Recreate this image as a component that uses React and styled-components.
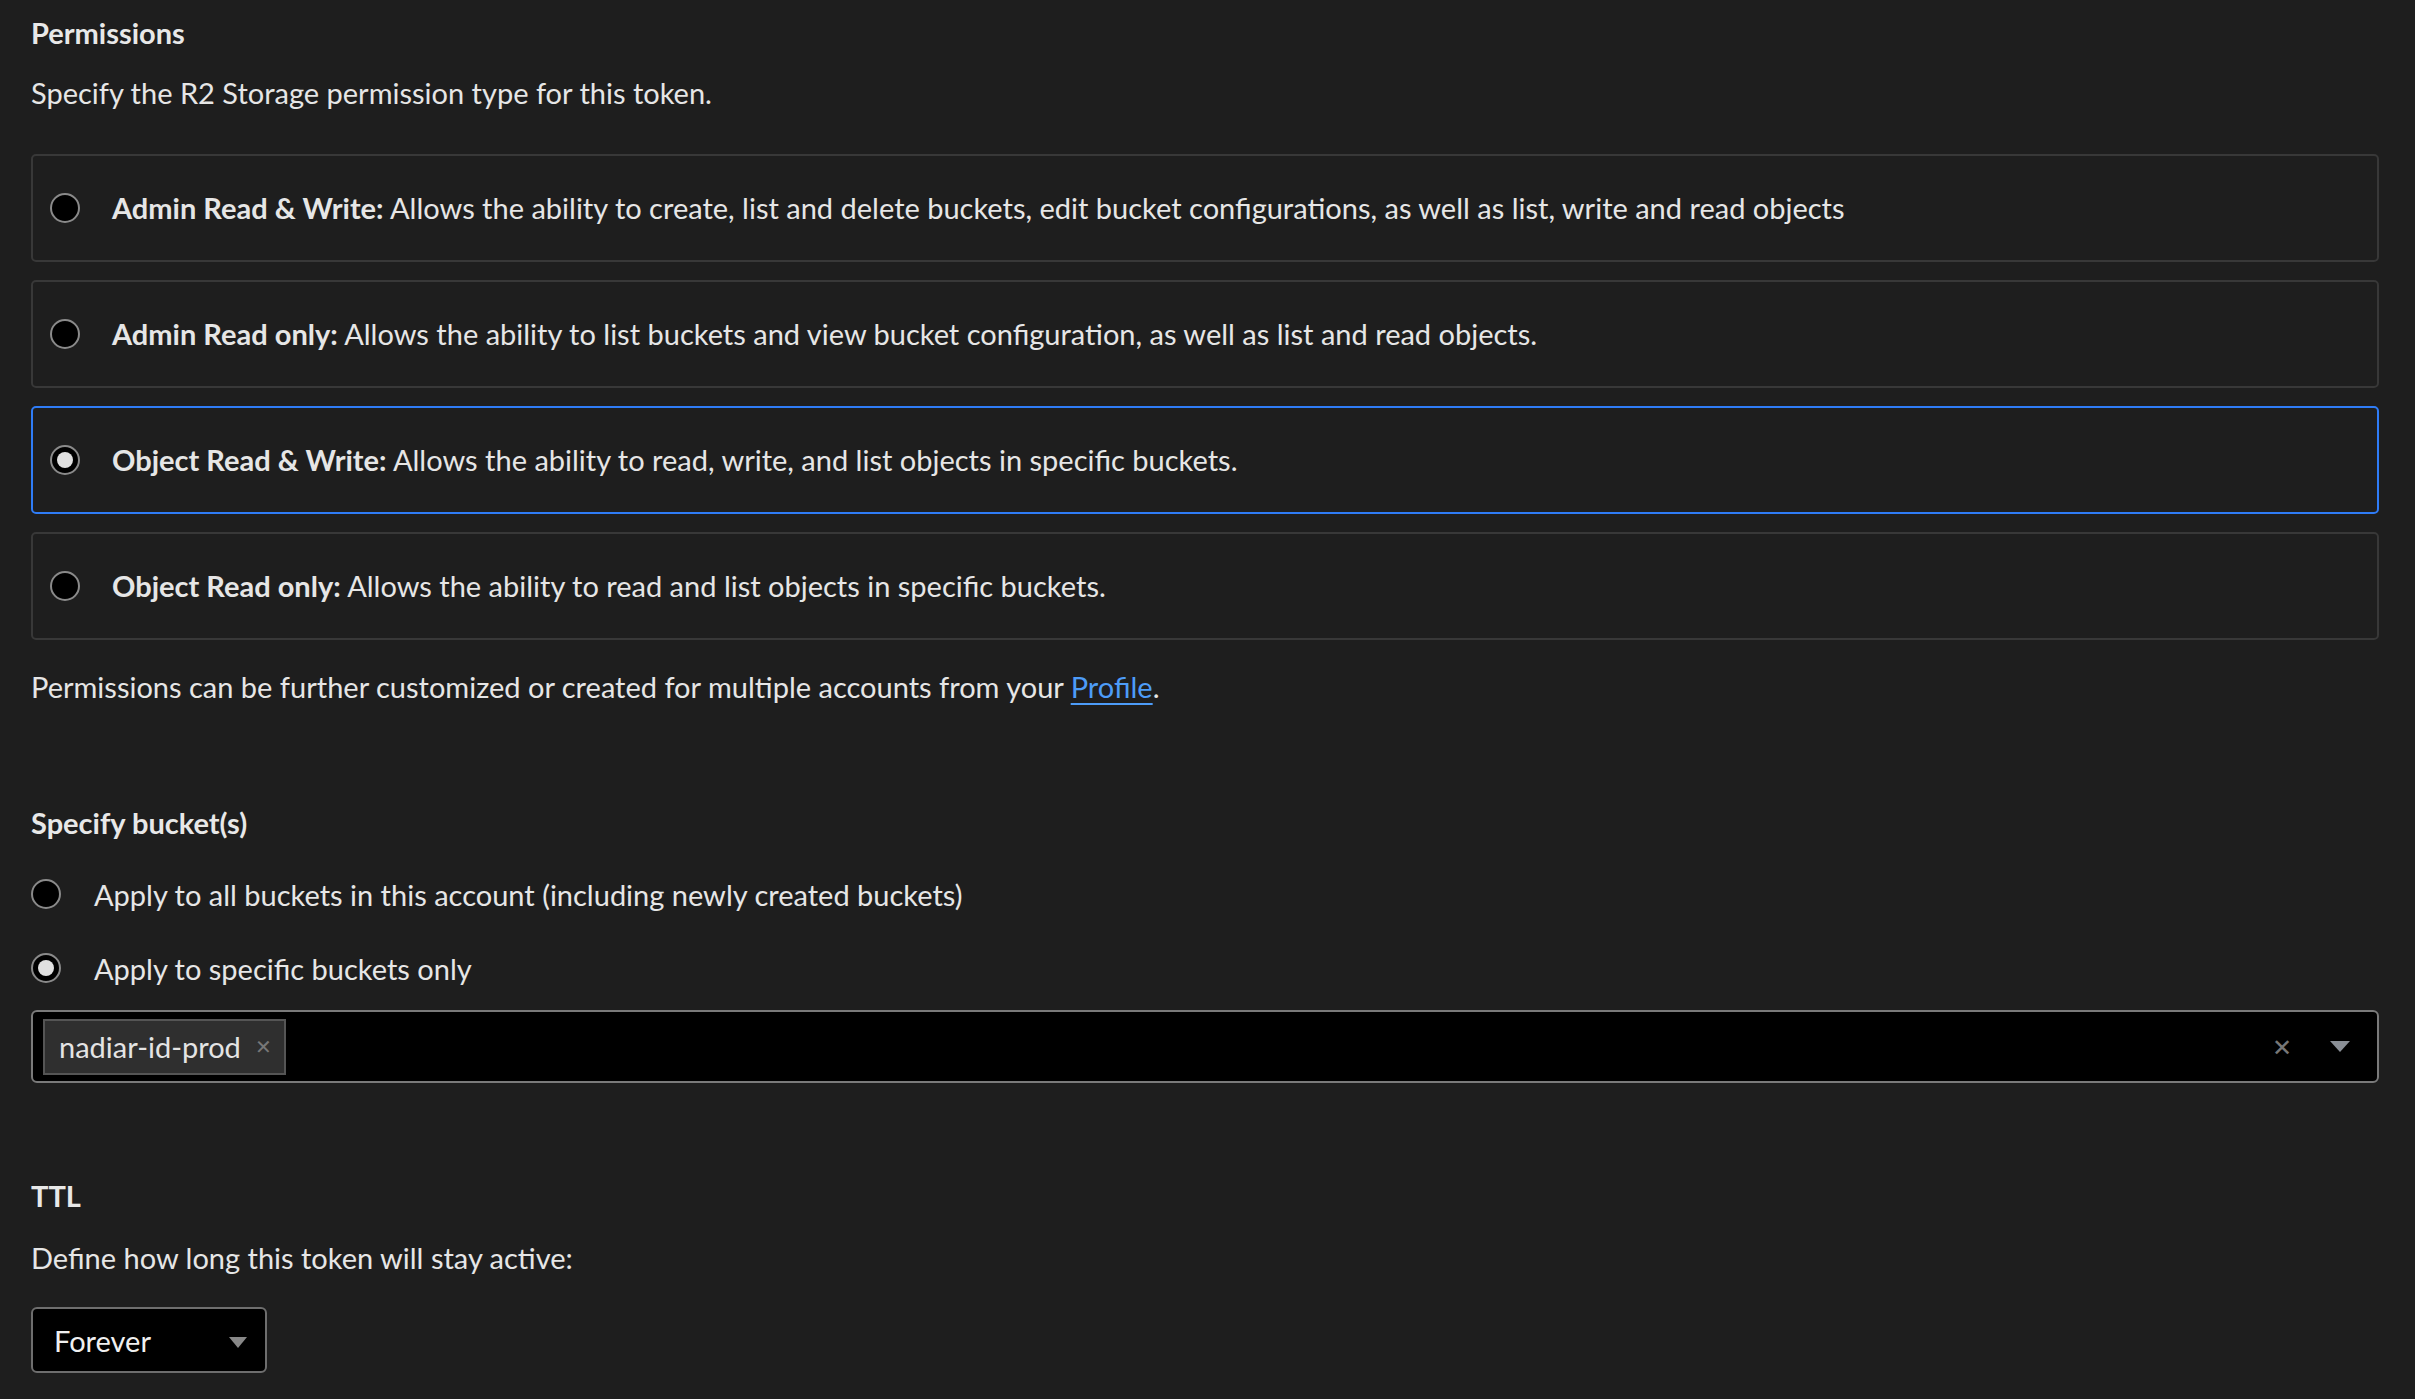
import React from 'react';
import styled, { createGlobalStyle } from 'styled-components';

const Global = createGlobalStyle`
  body { margin: 0; background: #1e1e1e; font-family: Lato, "Noto Sans", sans-serif; color: #e6e6e6; }
`;

const Page = styled.div`
  padding: 15px 36px 40px 31px;
  font-size: 29px;
`;

const Heading = styled.h3`
  margin: ${p => p.top || 0}px 0 0;
  font-size: 29px;
  font-weight: 700;
  color: #e8e8e8;
`;

const Text = styled.p`
  margin: ${p => p.top || 0}px 0 0;
  line-height: 1.3;
`;

const Cards = styled.div`
  display: flex;
  flex-direction: column;
  gap: 18px;
  margin-top: 42px;
`;

const Card = styled.label`
  display: flex;
  align-items: center;
  height: 108px;
  box-sizing: border-box;
  padding-left: 17px;
  border: 2px solid ${p => (p.active ? '#2f7cf6' : '#383838')};
  border-radius: 5px;
`;

const Radio = styled.span`
  width: 30px;
  height: 30px;
  box-sizing: border-box;
  border-radius: 50%;
  border: 2px solid #8a8a8a;
  background: #000;
  flex-shrink: 0;
  display: flex;
  align-items: center;
  justify-content: center;
  &::after {
    content: '';
    display: ${p => (p.checked ? 'block' : 'none')};
    width: 16px;
    height: 16px;
    border-radius: 50%;
    background: #e0e0e0;
  }
`;

const CardText = styled.span`
  margin-left: 32px;
  b { font-weight: 700; }
`;

const Link = styled.a`
  color: #4d9cf8;
  text-decoration: underline;
  text-underline-offset: 5px;
`;

const Option = styled.label`
  display: flex;
  align-items: center;
  gap: 33px;
  height: 40px;
  margin-top: ${p => p.top}px;
`;

const Select = styled.div`
  display: flex;
  align-items: center;
  margin-top: 22px;
  height: 73px;
  box-sizing: border-box;
  padding: 0 10px;
  background: #000;
  border: 2px solid #7a7a7a;
  border-radius: 6px;
`;

const Tag = styled.span`
  display: flex;
  align-items: center;
  gap: 14px;
  height: 52px;
  padding: 0 12px 0 14px;
  background: #2f2f2f;
  border: 2px solid #555;
  color: #e4e4e4;
`;

const Small = styled.span`
  color: #777;
  font-size: 20px;
`;

const Spacer = styled.div`
  flex: 1;
`;

const Caret = styled.span`
  width: 0;
  height: 0;
  border-left: 10px solid transparent;
  border-right: 10px solid transparent;
  border-top: 11px solid #8a8f96;
  margin: 0 17px 0 38px;
`;

const Dropdown = styled.div`
  display: flex;
  align-items: center;
  justify-content: space-between;
  width: 236px;
  height: 66px;
  box-sizing: border-box;
  margin-top: 30px;
  padding: 0 18px 0 21px;
  background: #000;
  border: 2px solid #6e6e6e;
  border-radius: 6px;
  color: #f0f0f0;
`;

const SmallCaret = styled(Caret)`
  border-left-width: 9px;
  border-right-width: 9px;
  border-top-width: 11px;
  margin: 4px 0 0;
  border-top-color: #888;
`;

const cards = [
  ['Admin Read & Write:', ' Allows the ability to create, list and delete buckets, edit bucket configurations, as well as list, write and read objects'],
  ['Admin Read only:', ' Allows the ability to list buckets and view bucket configuration, as well as list and read objects.'],
  ['Object Read & Write:', ' Allows the ability to read, write, and list objects in specific buckets.'],
  ['Object Read only:', ' Allows the ability to read and list objects in specific buckets.'],
];

export default function App() {
  return (
    <Page>
      <Global />
      <Heading>Permissions</Heading>
      <Text top={24}>Specify the R2 Storage permission type for this token.</Text>
      <Cards>
        {cards.map(([b, t], i) => (
          <Card key={b} active={i === 2}>
            <Radio checked={i === 2} />
            <CardText><b>{b}</b>{t}</CardText>
          </Card>
        ))}
      </Cards>
      <Text top={28}>
        Permissions can be further customized or created for multiple accounts from your <Link>Profile</Link>.
      </Text>
      <Heading top={100}>Specify bucket(s)</Heading>
      <Option top={34}><Radio />Apply to all buckets in this account (including newly created buckets)</Option>
      <Option top={34}><Radio checked />Apply to specific buckets only</Option>
      <Select>
        <Tag>nadiar-id-prod <Small>✕</Small></Tag>
        <Spacer />
        <Small style={{ fontSize: 24 }}>✕</Small>
        <Caret />
      </Select>
      <Heading top={95}>TTL</Heading>
      <Text top={26}>Define how long this token will stay active:</Text>
      <Dropdown>Forever <SmallCaret /></Dropdown>
    </Page>
  );
}
